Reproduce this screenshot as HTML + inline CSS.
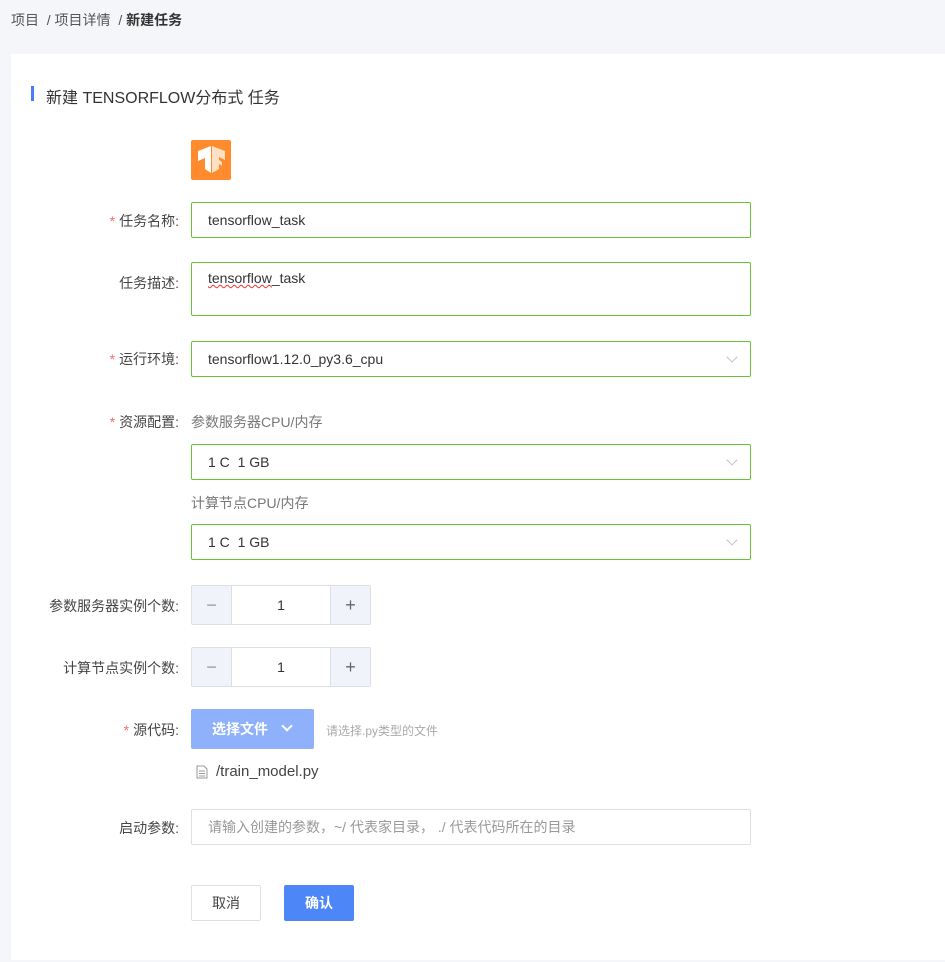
<!DOCTYPE html>
<html><head><meta charset="utf-8"><style>
*{box-sizing:border-box;margin:0;padding:0}
body{width:945px;height:962px;background:#f5f6fa;font-family:"Liberation Sans","Noto Sans CJK SC",sans-serif;font-size:14px;color:#333;position:relative;overflow:hidden}
.abs{position:absolute}
.card{position:absolute;left:11px;top:54px;width:934px;height:906px;background:#fff}
.lbl{position:absolute;right:766px;font-size:14px;color:#444;white-space:nowrap}
.lbl b{color:#f56c6c;font-weight:normal;margin-right:4px}
.inp{position:absolute;left:191px;width:560px;height:36px;border:1px solid #67c23a;border-radius:2px;padding-left:16px;line-height:34px;color:#333;background:#fff}
.arrow{position:absolute;right:14px;top:11px;width:8px;height:8px;border-right:1px solid #c0c4cc;border-bottom:1px solid #c0c4cc;transform:rotate(45deg)}
.num{position:absolute;left:191px;width:180px;height:40px;border:1px solid #dcdfe6;border-radius:2px;background:#fff}
.num .m,.num .p{position:absolute;top:0;width:40px;height:38px;background:#f0f3fa;color:#999;text-align:center;line-height:38px;font-size:18px}
.num .m{left:0;border-right:1px solid #dcdfe6}.num .p{right:0;border-left:1px solid #dcdfe6;color:#666}
.num .v{position:absolute;left:40px;right:40px;text-align:center;line-height:38px}
.sub{position:absolute;left:191px;color:#777;font-size:14px}
</style></head><body>
<div class="abs" style="left:11px;top:10px;font-size:14px;color:#555">项目 &nbsp;/ 项目详情 &nbsp;/ <b style="color:#333">新建任务</b></div>
<div class="card"></div>
<div class="abs" style="left:31px;top:86px;width:3px;height:15px;background:#4d7cf5"></div>
<div class="abs" style="left:46px;top:84px;font-size:16px;color:#333">新建 TENSORFLOW分布式 任务</div>
<div class="abs" style="left:191px;top:140px;width:40px;height:40px;background:#ff8b2c;border-radius:2px">
<svg width="40" height="40" viewBox="0 0 40 40"><path d="M7 11 L20 6 L20 33 L14 29 L14 18 L7 21Z" fill="#fff"/><path d="M21 6 L34 11 L34 20 L28 17 L28 20 L31 22 L31 26 L28 24 L28 29 L21 33Z" fill="#fde1c5"/></svg></div>

<div class="lbl" style="top:211px"><b>*</b>任务名称:</div>
<div class="inp" style="top:202px">tensorflow_task</div>

<div class="lbl" style="top:273px">任务描述:</div>
<div class="inp" style="top:262px;height:54px;line-height:normal;padding-top:7px"><span style="text-decoration:underline wavy #e33;text-decoration-thickness:1px">tensorflow</span>_task</div>

<div class="lbl" style="top:349px"><b>*</b>运行环境:</div>
<div class="inp" style="top:341px">tensorflow1.12.0_py3.6_cpu<div class="arrow"></div></div>

<div class="lbl" style="top:412px"><b>*</b>资源配置:</div>
<div class="sub" style="top:412px">参数服务器CPU/内存</div>
<div class="inp" style="top:444px">1 C &nbsp;1 GB<div class="arrow"></div></div>
<div class="sub" style="top:493px">计算节点CPU/内存</div>
<div class="inp" style="top:524px">1 C &nbsp;1 GB<div class="arrow"></div></div>

<div class="lbl" style="top:596px">参数服务器实例个数:</div>
<div class="num" style="top:585px"><div class="m">−</div><div class="v">1</div><div class="p">+</div></div>
<div class="lbl" style="top:658px">计算节点实例个数:</div>
<div class="num" style="top:647px"><div class="m">−</div><div class="v">1</div><div class="p">+</div></div>

<div class="lbl" style="top:720px"><b>*</b>源代码:</div>
<div class="abs" style="left:191px;top:709px;width:123px;height:40px;background:#8fb1fb;border-radius:2px;color:#fff;font-weight:bold;line-height:40px;padding-left:21px">选择文件<span style="position:absolute;left:92px;top:13px;width:8px;height:8px;border-right:2px solid #fff;border-bottom:2px solid #fff;transform:rotate(45deg)"></span></div>
<div class="abs" style="left:326px;top:722px;font-size:12px;color:#aaa">请选择.py类型的文件</div>
<svg class="abs" style="left:196px;top:765px" width="12" height="14" viewBox="0 0 12 14"><path d="M1 1h7l3 3v9H1z M3 6h6M3 8.5h6M3 11h6" fill="none" stroke="#999"/></svg>
<div class="abs" style="left:216px;top:763px;font-size:15px;color:#444">/train_model.py</div>

<div class="lbl" style="top:818px">启动参数:</div>
<div class="inp" style="top:809px;border-color:#dcdfe6;color:#999">请输入创建的参数，~/ 代表家目录， ./ 代表代码所在的目录</div>

<div class="abs" style="left:191px;top:885px;width:70px;height:36px;border:1px solid #dcdfe6;border-radius:2px;text-align:center;line-height:34px;color:#444">取消</div>
<div class="abs" style="left:284px;top:885px;width:70px;height:36px;background:#4d86f7;border-radius:2px;text-align:center;line-height:36px;color:#fff;font-weight:bold">确认</div>
</body></html>
